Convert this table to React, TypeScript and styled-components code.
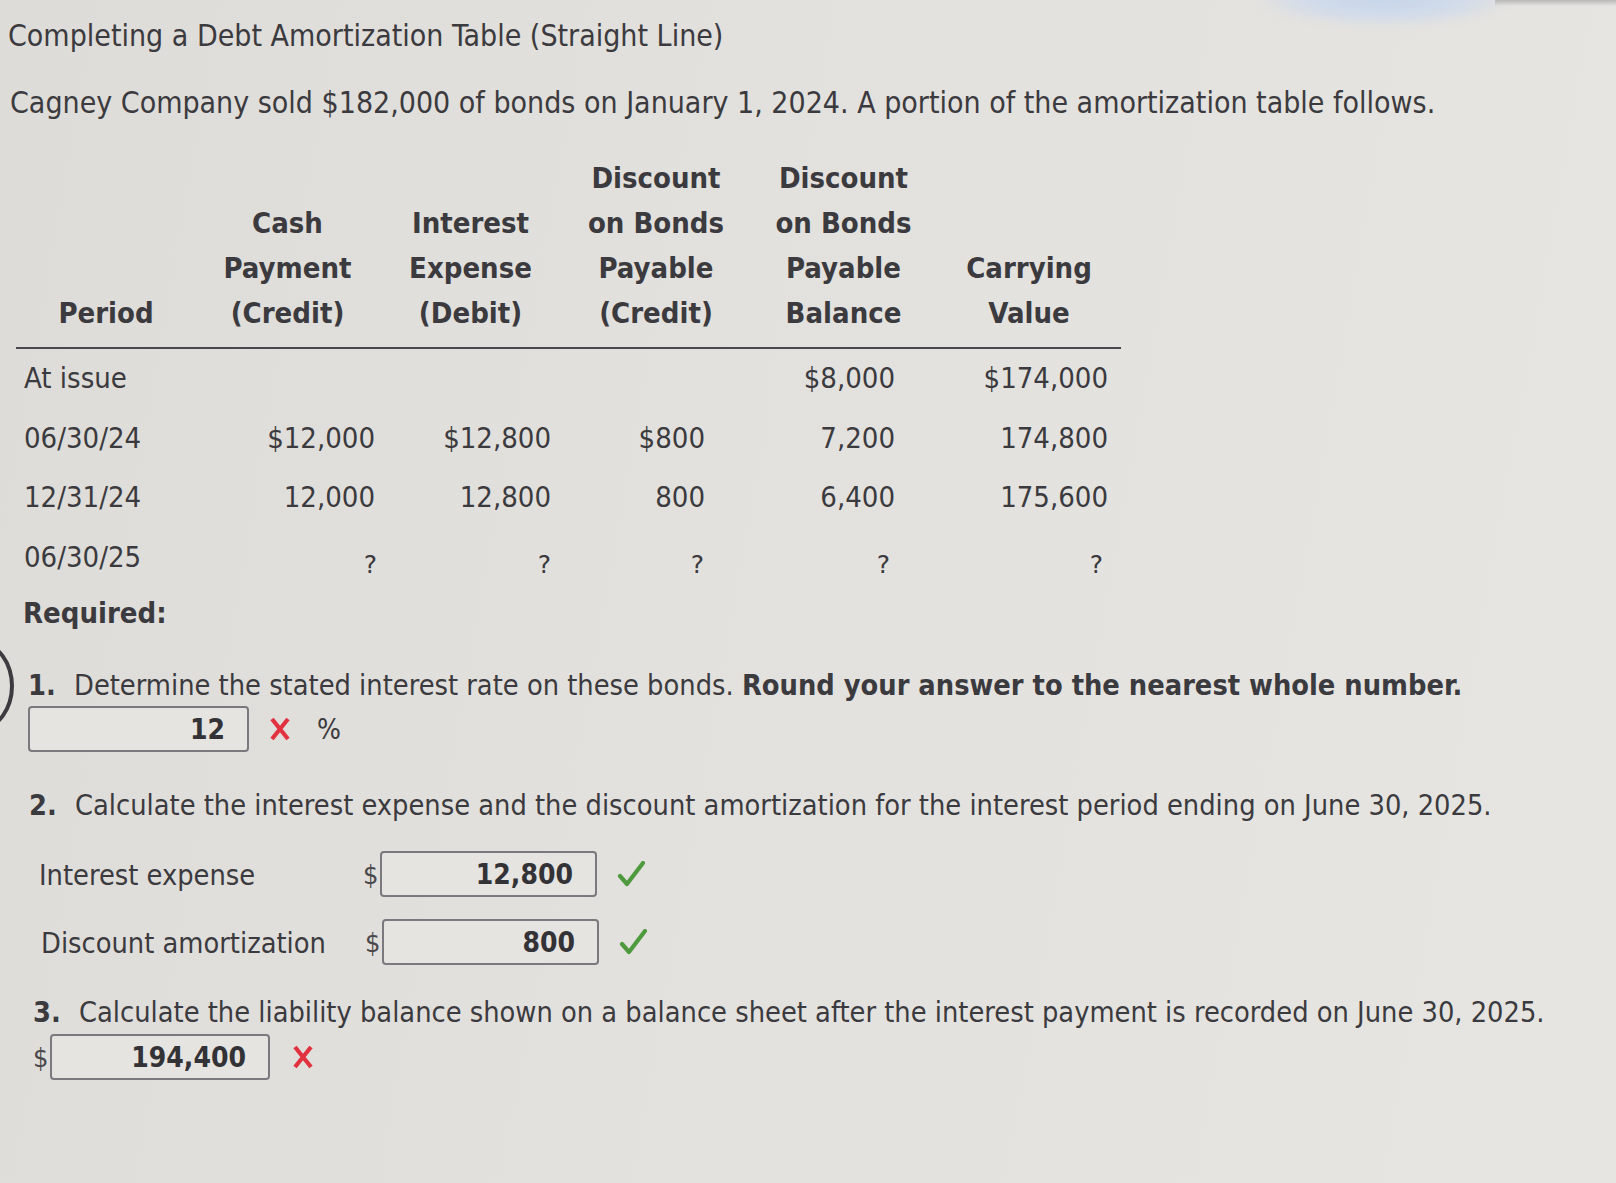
import React from "react";
import styled, { createGlobalStyle } from "styled-components";

const Global = createGlobalStyle`
  html, body { margin: 0; padding: 0; }
  body {
    background: #e2e0dc;
    font-family: "DejaVu Sans Condensed", "DejaVu Sans", Tahoma, sans-serif;
    font-stretch: condensed;
    color: #3b3a3e;
  }
`;

const Page = styled.div`
  position: relative;
  width: 1616px;
  height: 1183px;
  overflow: hidden;
  box-sizing: border-box;
  padding: 19px 0 0 8px;
  background: linear-gradient(100deg, #dedcd8 0%, #e3e1dd 45%, #e6e5e1 100%);
`;

const Glare = styled.div`
  position: absolute;
  top: -30px;
  left: 1260px;
  width: 250px;
  height: 56px;
  border-radius: 50%;
  background: radial-gradient(ellipse at center, #c6d5ea 0%, #d1dbea 45%, rgba(226, 224, 220, 0) 75%);
  filter: blur(4px);
`;

const TopStrip = styled.div`
  position: absolute;
  top: 0;
  left: 1495px;
  width: 121px;
  height: 6px;
  background: linear-gradient(180deg, #b9b8b6, rgba(226, 224, 220, 0));
`;

const EdgeRing = styled.div`
  position: absolute;
  left: -52px;
  top: 642px;
  width: 58px;
  height: 80px;
  border-radius: 50%;
  border: 4px solid #3d3a40;
`;

const Title = styled.h1`
  margin: 0;
  font-size: 30px;
  line-height: 34px;
  font-weight: normal;
`;

const Intro = styled.p`
  margin: 33px 0 0 2px;
  font-size: 30px;
  line-height: 34px;
`;

const Table = styled.div`
  margin: 36px 0 0 8px;
  width: 1105px;
  display: grid;
  grid-template-columns: 180px 183px 183px 188px 187px 184px;
  font-size: 29px;
`;

const HeadCell = styled.div`
  display: flex;
  flex-direction: column;
  justify-content: flex-end;
  align-items: center;
  font-weight: bold;
  line-height: 45px;
  padding-bottom: 11px;
  border-bottom: 2px solid #4a484c;
`;

const Cell = styled.div<{ $pad?: number; $left?: boolean }>`
  line-height: 59.5px;
  height: 59.5px;
  white-space: nowrap;
  text-align: ${(p) => (p.$left ? "left" : "right")};
  padding-left: ${(p) => (p.$left ? "8px" : "0")};
  padding-right: ${(p) => (p.$pad ?? 0)}px;
`;

const Q = styled.span`
  font-family: "DejaVu Sans", sans-serif;
  font-stretch: normal;
  font-size: 25px;
  position: relative;
  top: 6px;
`;

const Required = styled.div`
  margin: 9px 0 0 15px;
  font-size: 29px;
  line-height: 34px;
  font-weight: bold;
`;

const Item = styled.div<{ $top: number; $indent: number }>`
  margin-top: ${(p) => p.$top}px;
  padding-left: ${(p) => p.$indent}px;
  display: flex;
  font-size: 28.7px;
  line-height: 34px;
  white-space: nowrap;
`;

const Num = styled.span`
  width: 46px;
  font-weight: bold;
`;

const Strong = styled.b``;

const AnswerRow = styled.div<{ $top: number; $indent: number }>`
  margin-top: ${(p) => p.$top}px;
  padding-left: ${(p) => p.$indent}px;
  display: flex;
  align-items: center;
  font-size: 28.7px;
  height: 46px;
`;

const Label = styled.span`
  width: 324px;
  padding-top: 2px;
`;

const Dollar = styled.span`
  width: 17px;
  font-size: 27px;
  color: #4a484c;
`;

const Box = styled.div<{ $w: number }>`
  box-sizing: border-box;
  width: ${(p) => p.$w}px;
  height: 46px;
  border: 2px solid #7c797e;
  border-radius: 4px;
  background: #e5e4e0;
  display: flex;
  align-items: center;
  justify-content: flex-end;
  padding-right: 22px;
  font-weight: bold;
  font-size: 28px;
  color: #333236;
`;

const Mark = styled.span<{ $gap: number }>`
  margin-left: ${(p) => p.$gap}px;
  display: inline-flex;
  align-items: center;
`;

const Pct = styled.span`
  margin-left: 26px;
  font-size: 28px;
`;

const Cross = () => (
  <svg width="22" height="24" viewBox="0 0 22 24">
    <path d="M3 2 L19 22 M19 2 L3 22" stroke="#e2323f" strokeWidth="4.2" strokeLinecap="butt" fill="none" />
  </svg>
);

const Check = () => (
  <svg width="28" height="26" viewBox="0 0 28 26">
    <path d="M3 15 L10 23 L26 2" stroke="#4f9a3f" strokeWidth="4.2" strokeLinecap="round" strokeLinejoin="round" fill="none" />
  </svg>
);

type Row = { period: string; vals: string[] };

const rows: Row[] = [
  { period: "At issue", vals: ["", "", "", "$8,000", "$174,000"] },
  { period: "06/30/24", vals: ["$12,000", "$12,800", "$800", "7,200", "174,800"] },
  { period: "12/31/24", vals: ["12,000", "12,800", "800", "6,400", "175,600"] },
  { period: "06/30/25", vals: ["?", "?", "?", "?", "?"] },
];

const pads = [4, 11, 45, 42, 13];
const qPads = [2, 11, 46, 47, 18];

const headers: string[][] = [
  ["Period"],
  ["Cash", "Payment", "(Credit)"],
  ["Interest", "Expense", "(Debit)"],
  ["Discount", "on Bonds", "Payable", "(Credit)"],
  ["Discount", "on Bonds", "Payable", "Balance"],
  ["Carrying", "Value"],
];

export default function App() {
  return (
    <>
      <Global />
      <Page>
        <Glare />
        <TopStrip />
        <EdgeRing />
        <Title>Completing a Debt Amortization Table (Straight Line)</Title>
        <Intro>
          Cagney Company sold $182,000 of bonds on January 1, 2024. A portion of the amortization table follows.
        </Intro>
        <Table>
          {headers.map((h, i) => (
            <HeadCell key={i}>
              {h.map((line) => (
                <span key={line}>{line}</span>
              ))}
            </HeadCell>
          ))}
          {rows.map((r) => (
            <React.Fragment key={r.period}>
              <Cell $left>{r.period}</Cell>
              {r.vals.map((v, i) => (
                <Cell key={i} $pad={v === "?" ? qPads[i] : pads[i]}>
                  {v === "?" ? <Q>?</Q> : v}
                </Cell>
              ))}
            </React.Fragment>
          ))}
        </Table>
        <Required>Required:</Required>
        <Item $top={38} $indent={20}>
          <Num>1.</Num>
          <span>
            Determine the stated interest rate on these bonds.{" "}
            <Strong>Round your answer to the nearest whole number.</Strong>
          </span>
        </Item>
        <AnswerRow $top={4} $indent={20}>
          <Box $w={221}>12</Box>
          <Mark $gap={20}>
            <Cross />
          </Mark>
          <Pct>%</Pct>
        </AnswerRow>
        <Item $top={36} $indent={21}>
          <Num>2.</Num>
          <span>
            Calculate the interest expense and the discount amortization for the interest period ending on June 30, 2025.
          </span>
        </Item>
        <AnswerRow $top={29} $indent={31}>
          <Label>Interest expense</Label>
          <Dollar>$</Dollar>
          <Box $w={217}>12,800</Box>
          <Mark $gap={20}>
            <Check />
          </Mark>
        </AnswerRow>
        <AnswerRow $top={22} $indent={33}>
          <Label>Discount amortization</Label>
          <Dollar>$</Dollar>
          <Box $w={217}>800</Box>
          <Mark $gap={20}>
            <Check />
          </Mark>
        </AnswerRow>
        <Item $top={30} $indent={25}>
          <Num>3.</Num>
          <span>
            Calculate the liability balance shown on a balance sheet after the interest payment is recorded on June 30, 2025.
          </span>
        </Item>
        <AnswerRow $top={5} $indent={25}>
          <Dollar>$</Dollar>
          <Box $w={220}>194,400</Box>
          <Mark $gap={22}>
            <Cross />
          </Mark>
        </AnswerRow>
      </Page>
    </>
  );
}
